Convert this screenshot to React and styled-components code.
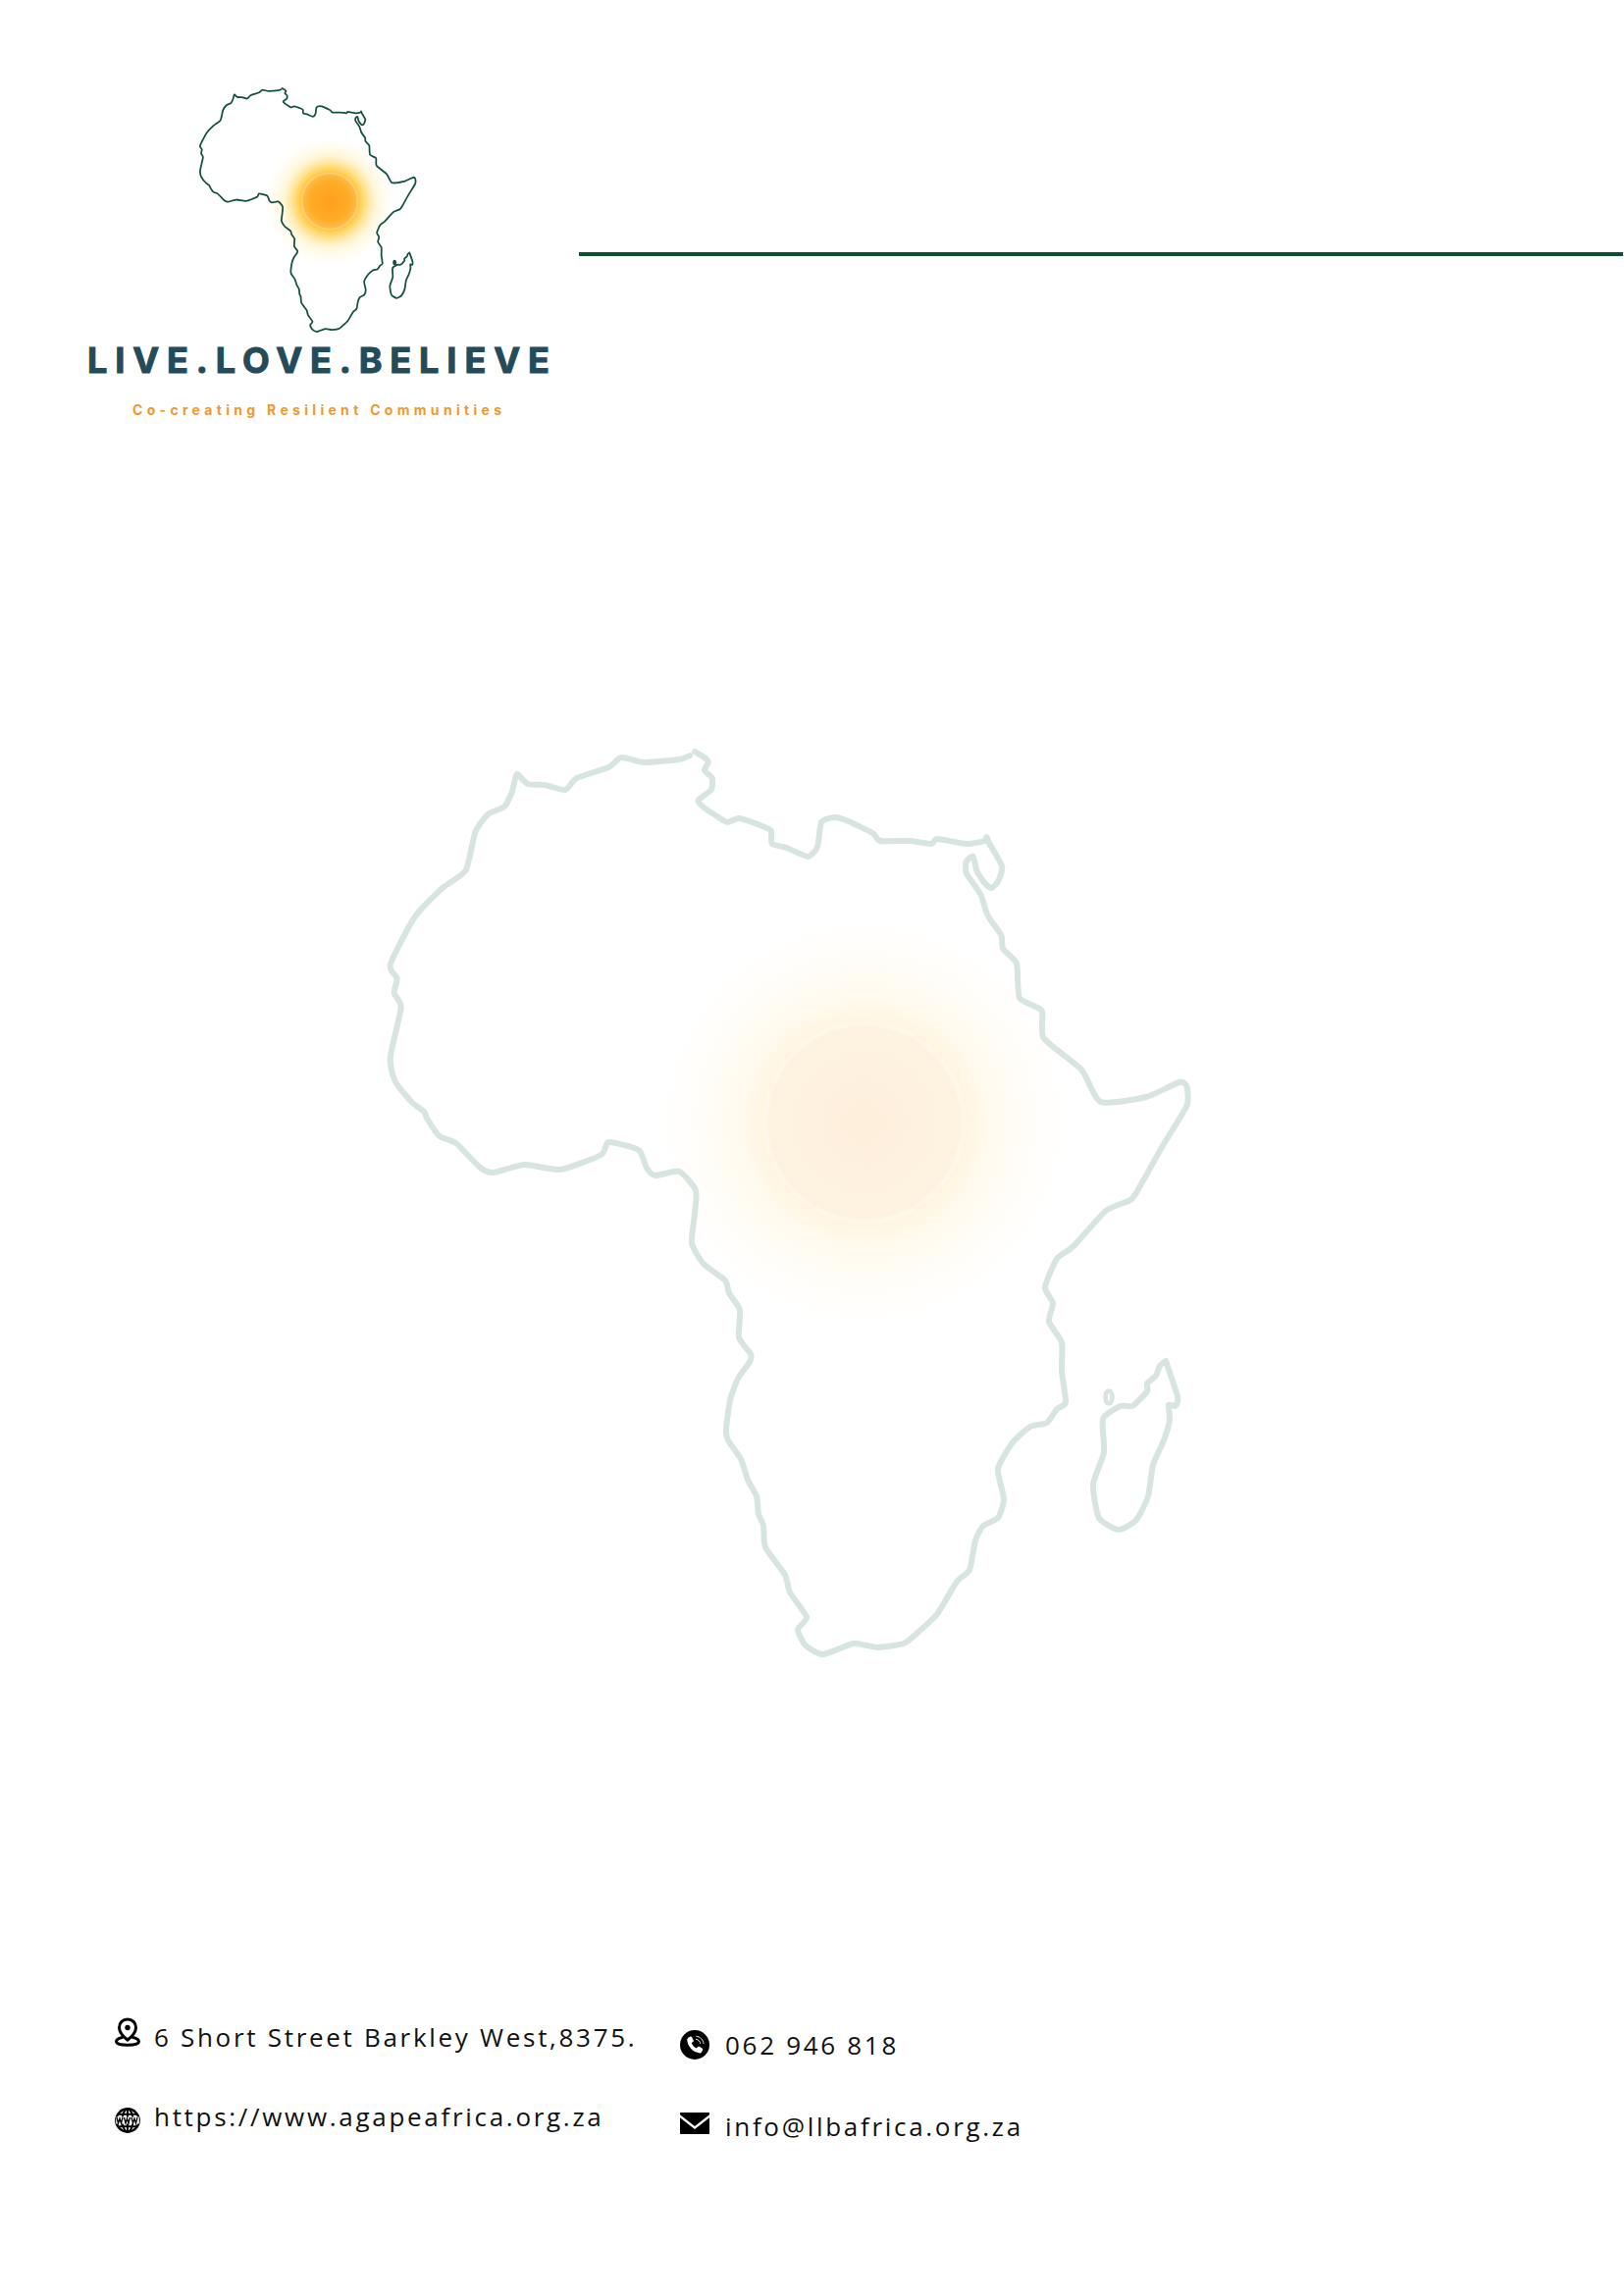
import React from "react";
import styled, { createGlobalStyle } from "styled-components";

const NORTH_EAST = [[713,766],[723,772],[727,777],[723,785],[731,793],[730,805],[717,815],[720,821],[736,832],[747,838],[759,834],[783,842],[792,847],[793,860],[808,864],[830,873],[840,863],[844,838],[858,833],[872,837],[897,849],[905,857],[936,857],[958,860],[964,855],[994,860],[1013,857],[1015,853],[1018,860],[1031,883],[1027,898],[1020,905],[1013,900],[1005,888],[1001,873],[994,878],[994,890],[1009,912],[1016,933],[1030,953],[1032,967],[1046,982],[1049,1017],[1072,1030],[1074,1058],[1113,1090],[1133,1123],[1180,1118],[1214,1103],[1222,1107],[1222,1127],[1197,1168],[1172,1212]];
const SOUTH = [[1152,1223],[1127,1234],[1094,1270],[1077,1283],[1065,1312],[1073,1328],[1069,1347],[1082,1368],[1082,1397],[1086,1429],[1077,1436],[1067,1450],[1050,1454],[1032,1470],[1017,1497],[1023,1528],[1017,1547],[1002,1555],[994,1570],[988,1600],[975,1612],[955,1645],[934,1665],[921,1675],[894,1679],[870,1675],[839,1686],[821,1677],[813,1661],[822,1648],[805,1623],[800,1605],[780,1577],[778,1555],[773,1543],[771,1525],[762,1508],[755,1487],[742,1468],[740,1457],[744,1427],[752,1405],[764,1388],[765,1380],[753,1363],[754,1335],[743,1318],[739,1305],[717,1288],[705,1267],[708,1237],[709,1213]];
const NORTH_WEST = [[697,1194],[672,1198],[663,1190],[655,1172],[624,1164],[616,1177],[574,1192],[537,1187],[505,1195],[491,1190],[466,1165],[449,1158],[436,1140],[433,1133],[420,1123],[403,1102],[398,1078],[409,1027],[402,1012],[405,997],[398,983],[423,935],[452,905],[476,887],[486,848],[499,830],[516,822],[524,807],[529,789],[540,799],[558,800],[579,805],[591,793],[624,782],[637,772],[661,777],[697,774],[708,770]];
const MADAGASCAR = [[1188,1387],[1182,1392],[1178,1402],[1169,1410],[1169,1418],[1154,1433],[1142,1433],[1124,1446],[1125,1480],[1114,1513],[1120,1547],[1140,1559],[1158,1549],[1170,1525],[1175,1493],[1186,1468],[1192,1447],[1191,1432],[1198,1433],[1200,1423],[1188,1387]];

const rescale = ([x, y]) => [380 + (x - 380) * 0.985, y];
const MAINLAND = [...NORTH_EAST.map(rescale), ...SOUTH, ...NORTH_WEST.map(rescale)];

const traced = (pts) => {
  const t = 0.6;
  let d = `M${pts[0][0]} ${pts[0][1]}`;
  for (let i = 0; i < pts.length - 1; i++) {
    const a = pts[Math.max(i - 1, 0)];
    const b = pts[i];
    const c = pts[i + 1];
    const e = pts[Math.min(i + 2, pts.length - 1)];
    const c1x = b[0] + ((c[0] - a[0]) / 6) * t;
    const c1y = b[1] + ((c[1] - a[1]) / 6) * t;
    const c2x = c[0] - ((e[0] - b[0]) / 6) * t;
    const c2y = c[1] - ((e[1] - b[1]) / 6) * t;
    d += ` C${c1x.toFixed(1)} ${c1y.toFixed(1)} ${c2x.toFixed(1)} ${c2y.toFixed(1)} ${c[0].toFixed(1)} ${c[1].toFixed(1)}`;
  }
  return d;
};

const AFRICA_PATH = traced(MAINLAND);
const ISLAND_PATH = traced(MADAGASCAR);

const Global = createGlobalStyle`
  html, body { margin: 0; padding: 0; background: #fff; }
  body { font-family: "Open Sans", "Liberation Sans", sans-serif; }
`;

const Page = styled.div`
  width: 1655px;
  height: 2340px;
  background: #fff;
  display: grid;
  grid-template-rows: 450px 1550px 1fr;
  overflow: hidden;
`;

const Header = styled.header`
  display: flex;
  align-items: flex-start;
`;

const Brand = styled.div`
  width: 590px;
  flex: none;
  display: flex;
  flex-direction: column;
  padding: 84px 0 0 89px;
  box-sizing: border-box;
`;

const LogoMark = styled.svg`
  display: block;
  width: 400px;
  height: 260px;
`;

const Wordmark = styled.div`
  margin-top: 4px;
  font-family: Inter, "Liberation Sans", sans-serif;
  font-weight: 700;
  font-size: 36px;
  line-height: 38px;
  letter-spacing: 7.9px;
  color: #234b5a;
  -webkit-text-stroke: 1px #234b5a;
  white-space: nowrap;
`;

const Tagline = styled.div`
  margin: 23px 0 0 46px;
  font-family: Inter, "Liberation Sans", sans-serif;
  font-weight: 700;
  font-size: 14px;
  line-height: 18px;
  letter-spacing: 4.3px;
  color: #f1982f;
  white-space: nowrap;
`;

const Rule = styled.div`
  flex: 1;
  height: 4px;
  margin: 257px 1px 0 0;
  background: #0c4f33;
`;

const Watermark = styled.main`
  display: flex;
  align-items: flex-start;
`;

const WatermarkMap = styled.svg`
  display: block;
  width: 1655px;
  height: 1550px;
`;

const Footer = styled.footer`
  display: flex;
  align-items: flex-start;
  padding-left: 117px;
`;

const ContactColumn = styled.div`
  display: flex;
  flex-direction: column;
  width: ${(p) => p.$width}px;
  padding-top: ${(p) => p.$top}px;
  gap: ${(p) => p.$gap}px;
`;

const ContactRow = styled.div`
  display: flex;
  align-items: center;
  gap: ${(p) => p.$gap}px;
  height: 36px;
  font-size: 26px;
  letter-spacing: 2.7px;
  color: #111;
  white-space: nowrap;
`;

const IconBox = styled.svg`
  flex: none;
  display: block;
  width: ${(p) => p.$w || 26}px;
  height: ${(p) => p.$h || 26}px;
  position: relative;
  top: ${(p) => p.$lift || 0}px;
`;

const PinIcon = () => (
  <IconBox viewBox="0 0 26 30" $w={26} $h={30} $lift={-5}>
    <path d="M13 2c-5 0-8.500 3.600-8.500 8.400 0 4.600 4.600 9.600 8.500 12.600 3.900-3 8.500-8 8.500-12.600C21.500 5.600 18 2 13 2z" fill="none" stroke="#000" strokeWidth="3" />
    <circle cx="13" cy="10.500" r="2.700" fill="#000" />
    <path d="M7.500 20.500C4 21.300 1.500 22.800 1.500 24.800c0 2.300 5 3.500 11.500 3.500s11.500-1.200 11.500-3.500c0-2-2.500-3.500-6-4.300" fill="none" stroke="#000" strokeWidth="3" strokeLinecap="round" />
  </IconBox>
);

const GlobeIcon = () => (
  <IconBox viewBox="0 0 26 26" $lift={4}>
    <circle cx="13" cy="13" r="11.700" fill="none" stroke="#000" strokeWidth="2.400" />
    <ellipse cx="13" cy="13" rx="5.500" ry="11.500" fill="none" stroke="#000" strokeWidth="2" />
    <path d="M13 1.500v23M3 6.800h20M3 19.200h20" stroke="#000" strokeWidth="2" fill="none" />
    <rect x="1.200" y="9.500" width="23.600" height="7" fill="#fff" />
    <path d="M2 10l1.500 6 1.500-5 1.500 5 1.500-6M9.500 10l1.500 6 1.500-5 1.500 5 1.500-6M17 10l1.500 6 1.500-5 1.500 5 1.500-6" fill="none" stroke="#000" strokeWidth="1.300" />
  </IconBox>
);

const PhoneIcon = () => (
  <IconBox viewBox="0 0 30 30" $w={30} $h={30}>
    <circle cx="15" cy="15" r="15" fill="#000" />
    <path d="M8.200 7.700l2.500-1.100c.5-.2 1 0 1.300.5l1.700 3.400c.2.500.1 1-.3 1.300l-1.700 1.300c.9 2.400 2.700 4.400 5 5.500l1.500-1.600c.4-.4.900-.5 1.400-.2l3.200 2c.5.300.6.800.4 1.300l-1.200 2.400c-.4.700-1.100 1.100-1.900 1-7-.9-12.100-6.300-12.900-13.400-.1-.8.300-1.500 1-2.200z" fill="#fff" />
    <path d="M16 9.300c2.500.2 4.500 2.200 4.800 4.700M16.300 6.300c4.200.3 7.400 3.500 7.700 7.700" fill="none" stroke="#fff" strokeWidth="0.900" />
  </IconBox>
);

const MailIcon = () => (
  <IconBox viewBox="0 0 30 22" $w={30} $h={22} $lift={-3}>
    <path d="M1 0h28c.6 0 1 .4 1 1v1.200L15 14 0 2.200V1c0-.6.400-1 1-1z" fill="#000" />
    <path d="M0 5.200l15 11.800L30 5.200V21c0 .6-.4 1-1 1H1c-.6 0-1-.4-1-1z" fill="#000" />
  </IconBox>
);

export default function App() {
  return (
    <Page>
      <Global />
      <Header>
        <Brand>
          <LogoMark viewBox="89 84 400 260">
            <defs>
              <radialGradient id="logoGlow">
                <stop offset="0.44" stopColor="#ffc63e" />
                <stop offset="0.55" stopColor="#ffdc78" stopOpacity="0.9" />
                <stop offset="0.72" stopColor="#fff0bc" stopOpacity="0.55" />
                <stop offset="1" stopColor="#fff8e0" stopOpacity="0" />
              </radialGradient>
              <radialGradient id="logoSun">
                <stop offset="0" stopColor="#fe9f1c" />
                <stop offset="0.7" stopColor="#ffac27" />
                <stop offset="1" stopColor="#ffbd4a" />
              </radialGradient>
            </defs>
            <circle cx="336" cy="205" r="66" fill="url(#logoGlow)" />
            <circle cx="336" cy="205" r="28.500" fill="url(#logoSun)" stroke="#ffcf7c" strokeWidth="1.500" />
            <g transform="translate(204 90) scale(0.27 0.2696) translate(-398 -766)" fill="none" stroke="#12503f" strokeWidth="6.500" strokeLinejoin="round" strokeLinecap="round">
              <path d={AFRICA_PATH} />
              <path d={ISLAND_PATH} />
              <ellipse cx="1132" cy="1424" rx="4" ry="7" fill="#12503f" />
            </g>
          </LogoMark>
          <Wordmark>LIVE.LOVE.BELIEVE</Wordmark>
          <Tagline>Co-creating Resilient Communities</Tagline>
        </Brand>
        <Rule />
      </Header>
      <Watermark>
        <WatermarkMap viewBox="0 450 1655 1550">
          <defs>
            <radialGradient id="bigGlow">
              <stop offset="0.44" stopColor="#fff5de" />
              <stop offset="0.56" stopColor="#fffaee" />
              <stop offset="0.74" stopColor="#fffdf8" />
              <stop offset="1" stopColor="#ffffff" stopOpacity="0" />
            </radialGradient>
            <radialGradient id="bigSun">
              <stop offset="0" stopColor="#fdeedb" />
              <stop offset="1" stopColor="#fef3e1" />
            </radialGradient>
          </defs>
          <circle cx="881" cy="1144" r="225" fill="url(#bigGlow)" />
          <circle cx="881" cy="1144" r="101" fill="url(#bigSun)" stroke="#fff7e8" strokeWidth="5" />
          <g fill="none" stroke="#d7e4df" strokeWidth="6" strokeLinejoin="round" strokeLinecap="round">
            <path d={AFRICA_PATH} />
            <path d={ISLAND_PATH} />
            <ellipse cx="1130" cy="1424" rx="3.500" ry="6.500" strokeWidth="4.500" />
          </g>
        </WatermarkMap>
      </Watermark>
      <Footer>
        <ContactColumn $width={576} $top={58} $gap={45}>
          <ContactRow $gap={14}>
            <PinIcon />
            <span>6 Short Street Barkley West,8375.</span>
          </ContactRow>
          <ContactRow $gap={14}>
            <GlobeIcon />
            <span>https://www.agapeafrica.org.za</span>
          </ContactRow>
        </ContactColumn>
        <ContactColumn $width={400} $top={66} $gap={47}>
          <ContactRow $gap={16}>
            <PhoneIcon />
            <span>062 946 818</span>
          </ContactRow>
          <ContactRow $gap={16}>
            <MailIcon />
            <span>info@llbafrica.org.za</span>
          </ContactRow>
        </ContactColumn>
      </Footer>
    </Page>
  );
}
